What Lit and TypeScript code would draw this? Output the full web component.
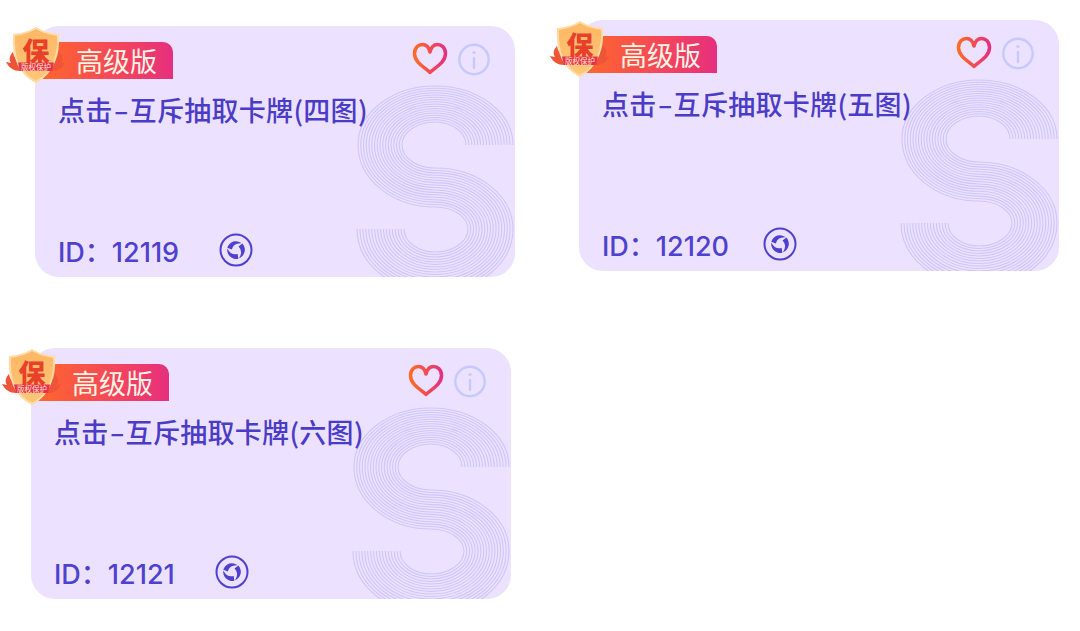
import { LitElement, html, css, svg } from "lit";
import { customElement, property } from "lit/decorators.js";

function sPaths() {
  const N = 17;
  const lerp = (a: number, b: number, t: number) => a + (b - a) * t;
  const out = [];
  for (let k = 0; k < N; k++) {
    const t = k / (N - 1);
    const sx = lerp(478, 431, t);
    const top = lerp(60, 96, t);
    const left = lerp(323, 367, t);
    const band = lerp(181, 142, t);
    const right = lerp(433, 478, t);
    const bottom = lerp(226, 266, t);
    const ex = lerp(369, 322, t);
    const cx = 400;
    const y1 = 119;
    const y2 = 203;
    const d = `M${sx} ${y1}A${sx - cx} ${y1 - top} 0 0 0 ${cx} ${top}A${cx - left} ${y1 - top} 0 0 0 ${left} ${y1}A${cx - left} ${band - y1} 0 0 0 ${cx} ${band}A${right - cx} ${y2 - band} 0 0 1 ${right} ${y2}A${right - cx} ${bottom - y2} 0 0 1 ${cx} ${bottom}A${cx - ex} ${bottom - y2} 0 0 1 ${ex} ${y2}`;
    out.push(svg`<path d=${d} />`);
  }
  return out;
}

const BLADE = "M8.300 14.700A9 9 0 0 1 22.700 10.300Q14.500 9.800 12.800 16.500Z";

@customElement("lib-card")
class LibCard extends LitElement {
  @property() name = "";
  @property() cid = "";

  static styles = css`
    :host { display: block; }
    .card {
      position: relative;
      width: 480px;
      height: 251px;
      box-sizing: border-box;
      padding-top: 16px;
      background: #ece2ff;
      border-radius: 24px;
      display: flex;
      flex-direction: column;
      font-family: "Noto Sans CJK SC", "Noto Sans", sans-serif;
    }
    .art {
      position: absolute;
      inset: 0;
      width: 480px;
      height: 251px;
      border-radius: 24px;
      fill: none;
      stroke: #cfc5fa;
      stroke-width: 1.1;
    }
    .head {
      position: relative;
      display: flex;
      align-items: flex-start;
      justify-content: space-between;
      height: 37px;
    }
    .badge {
      width: 138px;
      height: 37px;
      box-sizing: border-box;
      padding-left: 41px;
      background: linear-gradient(90deg, #ff6a27 0%, #f4465c 60%, #e62f7e 100%);
      border-top-right-radius: 10px;
      color: #fff3e2;
      font-size: 27px;
      line-height: 37px;
      white-space: nowrap;
    }
    .tools {
      display: flex;
      align-items: center;
      gap: 10px;
      margin-right: 25px;
    }
    .shield {
      position: absolute;
      left: -30px;
      top: -15px;
      width: 60px;
      height: 58px;
      overflow: visible;
    }
    .shield text { font-family: "Noto Sans CJK SC", sans-serif; }
    .title {
      position: relative;
      margin: 13px 0 0 23px;
      font-size: 27px;
      line-height: 36px;
      font-weight: 500;
      letter-spacing: 0.3px;
      color: #4a3cc6;
      white-space: nowrap;
    }
    .dash {
      display: inline-block;
      width: 17px;
      text-align: center;
      transform: scaleX(1.6);
    }
    .foot {
      position: relative;
      margin: auto 0 9px 23px;
      display: flex;
      align-items: center;
      height: 36px;
      color: #4f41cf;
      font-family: "Inter", "Noto Sans CJK SC", sans-serif;
      font-size: 27px;
      font-weight: 500;
      white-space: nowrap;
    }
    .id { width: 161px; }
    .colon { font-family: "Noto Sans CJK SC", sans-serif; }
    .swirl { width: 34px; height: 34px; }
  `;

  render() {
    const [a, b] = this.name.split("-");
    return html`
      <div class="card">
        <svg class="art" viewBox="0 0 480 251">${sPaths()}</svg>
        <div class="head">
          <div class="badge">高级版</div>
          <div class="tools">
            <svg width="36" height="34" viewBox="0 0 36 34">
              <defs>
                <linearGradient id="hg" x1="0" x2="1" y1="0" y2="0">
                  <stop offset="0" stop-color="#ff6a27" />
                  <stop offset="1" stop-color="#e62f7e" />
                </linearGradient>
              </defs>
              <path
                d="M18 30.500C15 26.500 2.500 21.500 2.500 11.500C2.500 5.500 6.500 2.500 10.500 2.500C14 2.500 16.800 5 18 10C19.200 5 22 2.500 25.500 2.500C29.500 2.500 33.500 5.500 33.500 11.500C33.500 21.500 21 26.500 18 30.500Z"
                fill="none"
                stroke="url(#hg)"
                stroke-width="3.500"
                stroke-linejoin="round"
              />
            </svg>
            <svg width="32" height="33" viewBox="0 0 32 33">
              <circle cx="16" cy="16.500" r="14.700" fill="none" stroke="#c6c9fd" stroke-width="2.400" />
              <circle cx="16" cy="9.500" r="1.600" fill="#c6c9fd" />
              <rect x="14.800" y="14" width="2.400" height="12" rx="1" fill="#c6c9fd" />
            </svg>
          </div>
          <svg class="shield" viewBox="0 0 60 58">
            <defs>
              <linearGradient id="sg" x1="0" x2="0" y1="0" y2="1">
                <stop offset="0" stop-color="#ffb765" />
                <stop offset="1" stop-color="#ffc778" />
              </linearGradient>
            </defs>
            <path d="M8 25C9 31 12 33 15 35L15 44C9 44 4 41 1 35C3 35 4 36 6 36C4 33 4 29 8 25Z" fill="#ef5438" />
            <path d="M54 25C53 31 50 33 47 35L47 44C53 44 58 41 60 35C59 35 58 36 56 36C58 33 58 29 54 25Z" fill="#ef5438" />
            <path d="M31 1C25 5 17 7 9 8C8 24 11 45 31 55C50 45 54 24 53 8C45 7 37 5 31 1Z" fill="url(#sg)" stroke="#ffdca6" stroke-width="2" />
            <text x="31" y="35" text-anchor="middle" font-size="27" font-weight="900" fill="#e8402a">保</text>
            <path d="M13 35.500H49L47 44H15Z" fill="#e8304f" />
            <text x="31" y="42.500" text-anchor="middle" font-size="7.500" fill="#ffe6c0">版权保护</text>
          </svg>
        </div>
        <div class="title">${a}<span class="dash">-</span>${b}</div>
        <div class="foot">
          <div class="id">ID<span class="colon">：</span>${this.cid}</div>
          <svg class="swirl" viewBox="0 0 34 34">
            <circle cx="17" cy="17" r="15.500" fill="none" stroke="#4f41cf" stroke-width="2" />
            <g fill="#4f41cf">
              <path d=${BLADE} />
              <path d=${BLADE} transform="rotate(120 17 17)" />
              <path d=${BLADE} transform="rotate(240 17 17)" />
            </g>
          </svg>
        </div>
      </div>
    `;
  }
}

@customElement("app-root")
class AppRoot extends LitElement {
  static styles = css`
    :host { display: block; width: 1080px; height: 631px; background: #fff; overflow: hidden; }
    .grid { display: grid; grid-template-columns: 544px 501px; align-items: start; padding-left: 35px; }
    .c1 { margin-top: 26px; }
    .c2 { margin-top: 20px; }
    .c3 { margin-top: 71px; margin-left: -4px; }
  `;
  render() {
    return html`
      <div class="grid">
        <lib-card class="c1" name="点击-互斥抽取卡牌(四图)" cid="12119"></lib-card>
        <lib-card class="c2" name="点击-互斥抽取卡牌(五图)" cid="12120"></lib-card>
        <lib-card class="c3" name="点击-互斥抽取卡牌(六图)" cid="12121"></lib-card>
      </div>
    `;
  }
}
